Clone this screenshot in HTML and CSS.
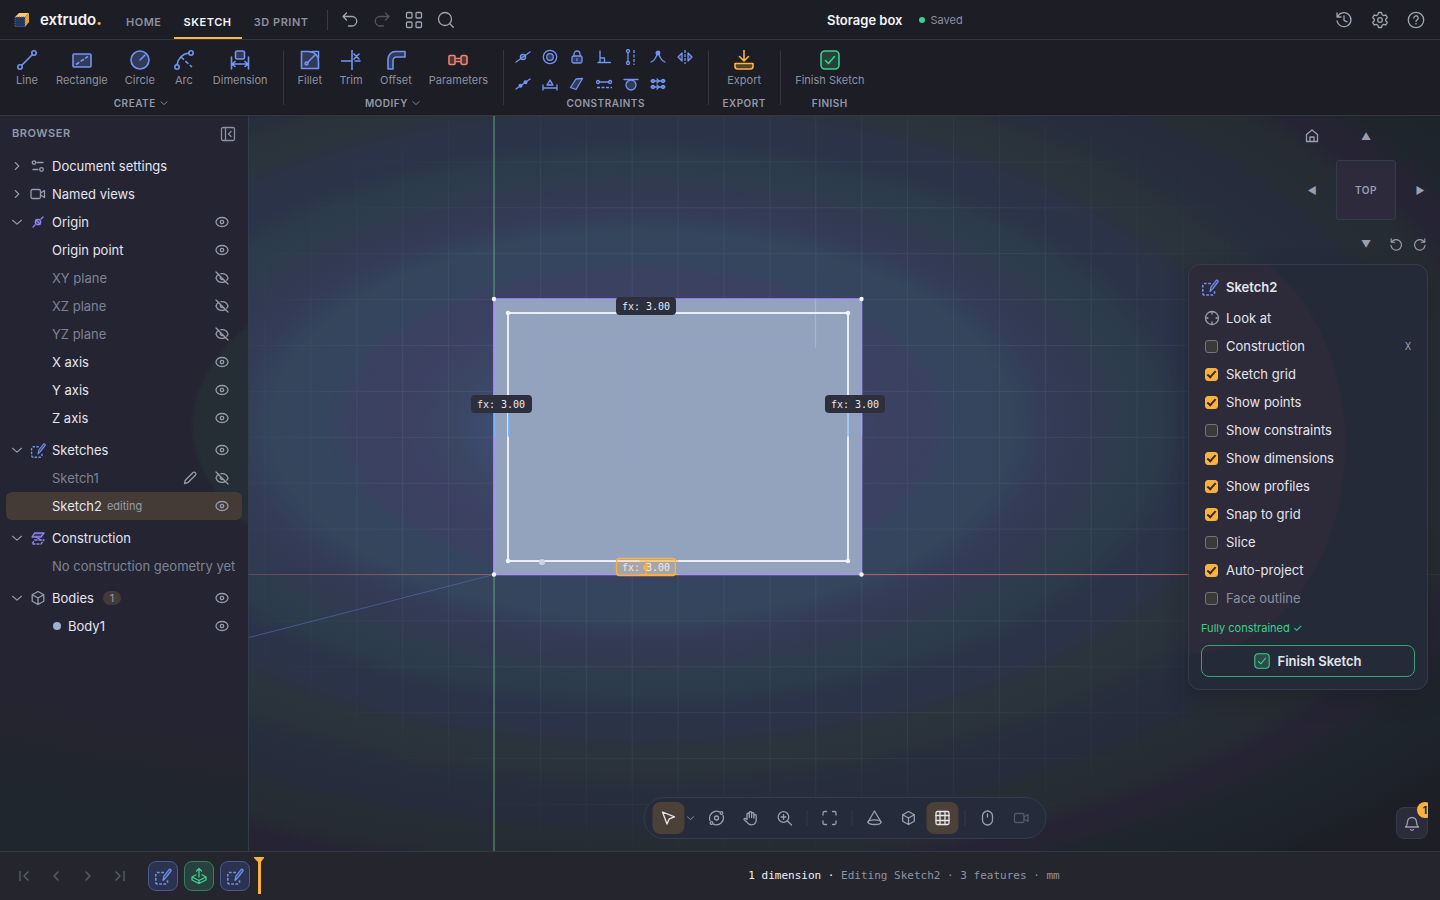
FILE: index.html
```html
<!DOCTYPE html>
<html lang="en">
<head>
<meta charset="utf-8">
<title>Storage box – extrudo</title>
<link rel="stylesheet" href="styles.css">
</head>
<body>
<svg class="sprite" aria-hidden="true">
  <symbol id="eye" viewBox="0 0 16 16"><ellipse cx="8" cy="8" rx="6" ry="4.5"/><circle cx="8" cy="8" r="1.7"/></symbol>
  <symbol id="eye-off" viewBox="0 0 16 16"><path d="M5 4.1C3.4 4.900 2.500 6.200 2 8c.9 2.800 3 4.400 6 4.400 1.200 0 2.200-.3 3.100-.8M7 3.600c3.500-.4 6 1.200 7 4.400-.3.900-.7 1.600-1.200 2.200M6.600 6.800a1.800 1.800 0 0 0 2.500 2.500M2 2l12 12"/></symbol>
  <symbol id="right" viewBox="0 0 16 16"><path d="M6 4l4 4-4 4"/></symbol>
  <symbol id="left" viewBox="0 0 16 16"><path d="M10 4L6 8l4 4"/></symbol>
  <symbol id="down" viewBox="0 0 16 16"><path d="M3 6l5 4.500L13 6"/></symbol>
  <symbol id="sketch" viewBox="0 0 20 20"><path d="M11 6H4a2 2 0 0 0-2 2v9a2 2 0 0 0 2 2h9a2 2 0 0 0 2-2v-3" stroke-width="1.700" stroke-linecap="butt" stroke-dasharray="3 1.700"/><path d="M10 15l1-5 6-7.500c1.200-.6 2.400.4 2 1.800l-6 7.700z" fill="currentColor" fill-opacity=".35"/></symbol>
  <symbol id="check-box" viewBox="0 0 20 20"><rect x="1" y="1" width="18" height="18" rx="4" fill="currentColor" fill-opacity=".22"/><path d="M5.500 10.500l3 3 6-7"/></symbol>
  <symbol id="cube" viewBox="0 0 16 16"><path d="M8 1.500l5.800 3.200v6.600L8 14.500l-5.800-3.200V4.700zM2.200 4.700L8 8l5.800-3.300M8 8v6.500"/></symbol>
  <symbol id="camera" viewBox="0 0 16 16"><rect x="1" y="3.500" width="9.500" height="9" rx="1.500"/><path d="M10.500 7l4-2.500v7l-4-2.500"/></symbol>
  <symbol id="point-line" viewBox="0 0 16 16"><path d="M1 13L15 3"/><circle cx="8" cy="8" r="2.600" fill="currentColor" fill-opacity=".3"/></symbol>
  <symbol id="undo" viewBox="0 0 18 18"><path d="M5.500 2L2 5.500 5.500 9M2 5.500h9a4.700 4.700 0 0 1 0 9.500H7.500"/></symbol>
  <symbol id="rotate" viewBox="0 0 16 16"><path d="M2.500 2v4h4M3 6a6 6 0 1 1-.8 3.500"/></symbol>
</svg>

<div class="app">
  <header class="topbar">
    <a class="brand" href="#">
      <svg width="16" height="16" viewBox="0 0 16 16"><path d="M1 5l4-4h10l-4 4z" fill="#ffc878" stroke="none"/><path d="M11 5l4-4v9l-4 5z" fill="#e8a03c" stroke="none"/><rect x="1" y="5" width="10" height="9.500" fill="#24375c" stroke="#4a70b0" stroke-width="1" stroke-linecap="butt" stroke-dasharray="1 1"/></svg>
      <span>extrudo<b>.</b></span>
    </a>
    <nav class="tabs">
      <button>HOME</button><button class="active">SKETCH</button><button>3D PRINT</button>
    </nav>
    <i class="bar"></i>
    <div class="quick">
      <button aria-label="Undo"><svg class="i18"><use href="#undo"/></svg></button>
      <button aria-label="Redo" class="off"><svg class="i18 flip"><use href="#undo"/></svg></button>
      <button aria-label="Apps"><svg class="i18" viewBox="0 0 18 18"><rect x="1.500" y="1.500" width="5.500" height="5.500" rx="1"/><rect x="11" y="1.500" width="5.500" height="5.500" rx="1"/><rect x="1.500" y="11" width="5.500" height="5.500" rx="1"/><rect x="11" y="11" width="5.500" height="5.500" rx="1"/></svg></button>
      <button aria-label="Search"><svg class="i18" viewBox="0 0 18 18"><circle cx="8" cy="8" r="6.500"/><path d="M12.800 12.800l3.500 3.500"/></svg></button>
    </div>
    <div class="doc"><strong>Storage box</strong><span class="saved"><i></i>Saved</span></div>
    <div class="account">
      <button aria-label="History"><svg class="i18" viewBox="0 0 18 18"><path d="M2 2v4h4M2.500 6a7 7 0 1 1-.4 4M9 5v4.300l3 1.500"/></svg></button>
      <button aria-label="Settings"><svg class="i18" viewBox="0 0 18 18"><path d="M7.500 1.500h3l.6 2.200 1.500.9 2.200-.6 1.500 2.600-1.600 1.600v1.600l1.600 1.600-1.500 2.600-2.200-.6-1.500.9-.6 2.200h-3l-.6-2.200-1.500-.9-2.200.6-1.500-2.600 1.600-1.600V8.200L1.700 6.600 3.200 4l2.200.6 1.500-.9z"/><circle cx="9" cy="9" r="2.300"/></svg></button>
      <button aria-label="Help"><svg class="i18" viewBox="0 0 18 18"><circle cx="9" cy="9" r="7.700"/><path d="M6.800 7a2.200 2.200 0 1 1 3.300 1.900c-.8.400-1.100.7-1.100 1.500M9 12.500v.6"/></svg></button>
    </div>
  </header>

  <div class="ribbon">
    <section class="group">
      <div class="tools">
        <button><svg class="i20" viewBox="0 0 20 20"><path d="M5 15L15 5"/><circle cx="3" cy="17" r="2.200"/><circle cx="17" cy="3" r="2.200"/></svg>Line</button>
        <button><svg class="i20" viewBox="0 0 20 20"><rect x="1" y="4" width="18" height="13" rx="1" class="tint"/><path d="M4 14.500L16 6.500" stroke-linecap="butt" stroke-dasharray="4 1.500"/></svg>Rectangle</button>
        <button><svg class="i20" viewBox="0 0 20 20"><circle cx="10" cy="10" r="9" class="tint"/><path d="M10 10l5-5"/></svg>Circle</button>
        <button><svg class="i20" viewBox="0 0 20 20"><path d="M3 15C4 9 8 4 15 3"/><path d="M7 7l11 10" stroke-linecap="butt" stroke-dasharray="4 2"/><circle cx="3" cy="17" r="2.200"/><circle cx="17" cy="3" r="2.200"/></svg>Arc</button>
        <button><svg class="i20" viewBox="0 0 20 20"><rect x="5.500" y="1" width="9" height="8" rx="1.500" class="tint"/><path d="M1.500 7v12M18.500 7v12M2 14h16M5 11.500L2 14l3 2.500M15 11.500l3 2.500-3 2.500"/></svg>Dimension</button>
      </div>
      <h2>CREATE <svg class="tiny"><use href="#down"/></svg></h2>
    </section>
    <section class="group">
      <div class="tools">
        <button><svg class="i20" viewBox="0 0 20 20"><path d="M1.500 1.500h7c6 0 10 4 10 10v7h-17z" class="tint"/><path d="M12 1.500h6.500V8M7 13l8-8"/><circle cx="6.500" cy="13.500" r="1.500"/></svg>Fillet</button>
        <button><svg class="i20" viewBox="0 0 20 20"><path d="M0 11h11M11 0v20M13 4l5 5M18 4l-5 5M14 11h5"/></svg>Trim</button>
        <button><svg class="i20" viewBox="0 0 20 20"><path d="M2 19V9a7.500 7.500 0 0 1 7.500-7.500H19V7h-8.500A3.500 3.500 0 0 0 7 10.500V19z" class="tint"/></svg>Offset</button>
        <button class="red"><svg class="i20" viewBox="0 0 20 20"><rect x="1" y="5.500" width="6" height="9" rx="1" class="tint"/><rect x="13" y="5.500" width="6" height="9" rx="2" class="tint"/><path d="M8 8.500h4M8 11.500h4"/></svg>Parameters</button>
      </div>
      <h2>MODIFY <svg class="tiny"><use href="#down"/></svg></h2>
    </section>
    <section class="group">
      <div class="constraints">
        <button aria-label="Coincident"><svg class="i16"><use href="#point-line"/></svg></button>
        <button aria-label="Concentric"><svg class="i16" viewBox="0 0 16 16"><circle cx="8" cy="8" r="6.700"/><circle cx="8" cy="8" r="3.300" class="tint"/></svg></button>
        <button aria-label="Fix"><svg class="i16" viewBox="0 0 16 16"><rect x="3" y="7" width="10" height="7" rx="1.500" class="tint"/><path d="M5 7V5a3 3 0 0 1 6 0v2M8 10v1.500"/></svg></button>
        <button aria-label="Perpendicular"><svg class="i16" viewBox="0 0 16 16"><path d="M4 2v11.500M2 13.500h12.500M4 9h4.500v4.500"/></svg></button>
        <button aria-label="Vertical"><svg class="i16" viewBox="0 0 16 16"><path d="M5 4v8"/><circle cx="5" cy="2" r="1.500"/><circle cx="5" cy="14" r="1.500"/><path d="M11 1v15" stroke-linecap="butt" stroke-dasharray="3 1.500"/></svg></button>
        <button aria-label="Midpoint"><svg class="i16" viewBox="0 0 16 16"><path d="M1 13C4 12 5 10 8 4c3 6 4 8 7 9"/><circle cx="8" cy="4" r="1.800" fill="currentColor"/></svg></button>
        <button aria-label="Symmetry"><svg class="i16" viewBox="0 0 16 16"><path d="M8 1v14" stroke-linecap="butt" stroke-dasharray="3 1"/><path d="M5 4v8L1 8zM11 4v8l4-4z" class="tint"/></svg></button>
        <button aria-label="Collinear"><svg class="i16" viewBox="0 0 16 16"><path d="M1 13L15 3"/><circle cx="5.500" cy="9.800" r="1.400" fill="currentColor"/><circle cx="10.500" cy="6.200" r="1.400" fill="currentColor"/></svg></button>
        <button aria-label="Equal"><svg class="i16" viewBox="0 0 16 16"><path d="M1 9v5M15 9v5M1 12h14"/><path d="M8 4l3 5H5z" class="tint"/></svg></button>
        <button aria-label="Parallel"><svg class="i16" viewBox="0 0 16 16"><path d="M1.500 11.500L7 3l6.500-.5L7 13.500z" class="tint"/></svg></button>
        <button aria-label="Horizontal"><svg class="i16" viewBox="0 0 16 16"><path d="M1 11.500h15" stroke-linecap="butt" stroke-dasharray="3 1.500"/><path d="M3 6h10"/><circle cx="2" cy="6" r="1.500"/><circle cx="14" cy="6" r="1.500"/></svg></button>
        <button aria-label="Tangent"><svg class="i16" viewBox="0 0 16 16"><path d="M1 3.500h14"/><circle cx="8" cy="9" r="5" class="tint"/></svg></button>
        <button aria-label="Pattern"><svg class="i16" viewBox="0 0 16 16"><path d="M1 5h14M1 11h14"/><circle cx="3" cy="5" r="1.500"/><circle cx="13" cy="5" r="1.500"/><circle cx="3" cy="11" r="1.500"/><circle cx="13" cy="11" r="1.500"/><path d="M7 3l2 2-2 2M7 9l2 2-2 2"/></svg></button>
      </div>
      <h2>CONSTRAINTS</h2>
    </section>
    <section class="group">
      <div class="tools">
        <button class="amber"><svg class="i20" viewBox="0 0 20 20"><path d="M10 0v10M5.500 6.500L10 11l4.500-4.500"/><path d="M1 13.500h18v3a2.500 2.500 0 0 1-2.500 2.500h-13A2.500 2.500 0 0 1 1 16.500z" class="tint"/></svg>Export</button>
      </div>
      <h2>EXPORT</h2>
    </section>
    <section class="group">
      <div class="tools">
        <button class="green"><svg class="i20"><use href="#check-box"/></svg>Finish Sketch</button>
      </div>
      <h2>FINISH</h2>
    </section>
  </div>

  <main class="work">
    <aside class="browser">
      <div class="browser-head"><h2>BROWSER</h2><button aria-label="Collapse"><svg class="i16" viewBox="0 0 16 16"><rect x="1.500" y="1.500" width="13" height="13" rx="1.500"/><path d="M5.500 1.500v13M11 5.500L8.500 8l2.500 2.500"/></svg></button></div>
      <ul class="tree">
        <li><svg class="chev"><use href="#right"/></svg><svg class="i16" viewBox="0 0 16 16"><circle cx="4" cy="4.500" r="1.700"/><path d="M7 4.500h6M3 11.500h5"/><circle cx="11.500" cy="11.500" r="1.800"/></svg><span>Document settings</span></li>
        <li><svg class="chev"><use href="#right"/></svg><svg class="i16"><use href="#camera"/></svg><span>Named views</span></li>
        <li><svg class="chev"><use href="#down"/></svg><svg class="i16 violet" viewBox="0 0 16 16"><path d="M3 13l2-2M11 5l2-2M6 6l4 4"/><circle cx="8" cy="8" r="2.700" class="tint"/></svg><span>Origin</span><button class="vis" aria-label="Hide Origin"><svg class="i16"><use href="#eye"/></svg></button></li>
        <li class="child"><span>Origin point</span><button class="vis" aria-label="Hide Origin point"><svg class="i16"><use href="#eye"/></svg></button></li>
        <li class="child dim"><span>XY plane</span><button class="vis" aria-label="Show XY plane"><svg class="i16"><use href="#eye-off"/></svg></button></li>
        <li class="child dim"><span>XZ plane</span><button class="vis" aria-label="Show XZ plane"><svg class="i16"><use href="#eye-off"/></svg></button></li>
        <li class="child dim"><span>YZ plane</span><button class="vis" aria-label="Show YZ plane"><svg class="i16"><use href="#eye-off"/></svg></button></li>
        <li class="child"><span>X axis</span><button class="vis" aria-label="Hide X axis"><svg class="i16"><use href="#eye"/></svg></button></li>
        <li class="child"><span>Y axis</span><button class="vis" aria-label="Hide Y axis"><svg class="i16"><use href="#eye"/></svg></button></li>
        <li class="child"><span>Z axis</span><button class="vis" aria-label="Hide Z axis"><svg class="i16"><use href="#eye"/></svg></button></li>
        <li class="section"><svg class="chev"><use href="#down"/></svg><svg class="i16 blue"><use href="#sketch"/></svg><span>Sketches</span><button class="vis" aria-label="Hide Sketches"><svg class="i16"><use href="#eye"/></svg></button></li>
        <li class="child dim"><span>Sketch1</span><button class="vis" aria-label="Edit Sketch1"><svg class="i16" viewBox="0 0 16 16"><path d="M2.500 13.500l.8-3.300 7.500-7.500a1.700 1.700 0 0 1 2.500 2.500l-7.500 7.500z"/></svg></button><button class="vis" aria-label="Show Sketch1"><svg class="i16"><use href="#eye-off"/></svg></button></li>
        <li class="child selected"><span>Sketch2</span><small>editing</small><button class="vis" aria-label="Hide Sketch2"><svg class="i16"><use href="#eye"/></svg></button></li>
        <li class="section"><svg class="chev"><use href="#down"/></svg><svg class="i16 violet" viewBox="0 0 16 16"><path d="M4.500 3h9.500l-3 4H2z" class="tint"/><path d="M6 7l5 3" /><path d="M4.500 10h9.500l-3 4H2z" stroke-linecap="butt" stroke-dasharray="3 1"/></svg><span>Construction</span></li>
        <li class="child dim"><span>No construction geometry yet</span></li>
        <li class="section"><svg class="chev"><use href="#down"/></svg><svg class="i16"><use href="#cube"/></svg><span>Bodies</span><em>1</em><button class="vis" aria-label="Hide Bodies"><svg class="i16"><use href="#eye"/></svg></button></li>
        <li class="child"><i class="swatch"></i><span>Body1</span><button class="vis" aria-label="Hide Body1"><svg class="i16"><use href="#eye"/></svg></button></li>
      </ul>
    </aside>

    <div class="viewport">
      <svg class="scene" viewBox="249 116 1191 735" preserveAspectRatio="xMidYMid slice" role="img" aria-label="Sketch of a box outline">
        <defs>
          <pattern id="grid" x="494" y="574.500" width="45.900" height="45.900" patternUnits="userSpaceOnUse"><path d="M0 0H45.900M0 0V45.900" stroke="#7f9fa5" stroke-width="2" fill="none"/></pattern>
          <radialGradient id="fade" gradientUnits="userSpaceOnUse" cx="0" cy="0" r="1" gradientTransform="translate(760 450) scale(600 440)"><stop offset="0" stop-color="#fff" stop-opacity=".7"/><stop offset=".6" stop-color="#fff"/><stop offset="1" stop-color="#fff" stop-opacity="0"/></radialGradient>
          <mask id="gridmask"><rect x="249" y="116" width="1191" height="735" fill="url(#fade)"/></mask>
          <linearGradient id="xaxis" gradientUnits="userSpaceOnUse" x1="249" y1="0" x2="1440" y2="0"><stop offset="0" stop-color="#d4605e" stop-opacity=".3"/><stop offset=".3" stop-color="#d4605e" stop-opacity=".8"/><stop offset=".75" stop-color="#d4605e" stop-opacity=".9"/><stop offset="1" stop-color="#d4605e" stop-opacity=".1"/></linearGradient>
        </defs>
        <rect x="249" y="116" width="1191" height="735" fill="url(#grid)" mask="url(#gridmask)" opacity=".13"/>
        <path d="M249 574.500H1440" stroke="url(#xaxis)" stroke-width="1.200"/>
        <path d="M494 116V851" stroke="#4f9d70" stroke-width="1.300" opacity=".85"/>
        <path d="M494 574.500L249 637.500" stroke="#5470bd" stroke-width=".8" opacity=".75"/>
        <rect x="494" y="299" width="368" height="275.500" fill="#94a3bd"/>
        <path d="M540 299v80M632 299v155M494 345H820" stroke="#94a0cc" opacity=".5"/>
        <path d="M815.500 299v48" stroke="#b0bbcd" opacity=".7"/>
        <path d="M861.500 299V574.500H494V299H862" fill="none" stroke="#a593fb" stroke-width="1.600"/>
        <rect x="508" y="313" width="340" height="248" fill="none" stroke="#eceef7" stroke-width="2"/>
        <path d="M494.500 412v24M508.500 412v24M848 412v24M861.500 412v24" stroke="#7db2f8"/>
        <g fill="#f3f4fa"><circle cx="494" cy="299" r="2.200"/><circle cx="861.500" cy="299" r="2.200"/><circle cx="494" cy="574.500" r="2.200"/><circle cx="861.500" cy="574.500" r="2.200"/><circle cx="508" cy="313" r="2.200"/><circle cx="848" cy="313" r="2.200"/><circle cx="508" cy="561" r="2.200"/><circle cx="848" cy="561" r="2.200"/><circle cx="542" cy="562" r="3" fill="#ccd4e4"/></g>
        <g class="dims">
          <rect x="616" y="297" width="60" height="18" rx="4"/><text x="646" y="310">fx: 3.00</text>
          <rect x="471" y="395" width="61" height="18" rx="4"/><text x="501" y="408">fx: 3.00</text>
          <rect x="825" y="395" width="60" height="18" rx="4"/><text x="855" y="408">fx: 3.00</text>
          <rect class="hot" x="616.500" y="558.500" width="59" height="17" rx="3"/>
          <path d="M640 561h38M640 574.500h38M646 561v13" stroke="#fdb13d" stroke-width="1.200"/>
          <circle cx="646" cy="567.500" r="3" fill="#fdb13d"/><text x="646" y="571">fx: 3.00</text>
        </g>
      </svg>

      <div class="viewcube">
        <button aria-label="Home view"><svg class="i16" viewBox="0 0 16 16"><path d="M2.500 6.500L8 2l5.500 4.500v7h-11zM6 13.500V9h4v4.500"/></svg></button>
        <button>▲</button><i></i>
        <button>◀</button><button class="face">TOP</button><button>▶</button>
        <i></i><button>▼</button>
        <div class="turn"><button aria-label="Rotate left"><svg class="i14"><use href="#rotate"/></svg></button><button aria-label="Rotate right"><svg class="i14 flip"><use href="#rotate"/></svg></button></div>
      </div>

      <section class="palette">
        <h3><svg class="i18 blue"><use href="#sketch"/></svg>Sketch2</h3>
        <button class="row"><svg class="i16" viewBox="0 0 16 16"><circle cx="8" cy="8" r="6.500"/><path d="M8 1.500V4M8 12v2.500M1.500 8H4M12 8h2.500"/></svg>Look at</button>
        <label class="row"><input type="checkbox">Construction<kbd>X</kbd></label>
        <label class="row"><input type="checkbox" checked>Sketch grid</label>
        <label class="row"><input type="checkbox" checked>Show points</label>
        <label class="row"><input type="checkbox">Show constraints</label>
        <label class="row"><input type="checkbox" checked>Show dimensions</label>
        <label class="row"><input type="checkbox" checked>Show profiles</label>
        <label class="row"><input type="checkbox" checked>Snap to grid</label>
        <label class="row"><input type="checkbox">Slice</label>
        <label class="row"><input type="checkbox" checked>Auto-project</label>
        <label class="row dim"><input type="checkbox">Face outline</label>
        <p>Fully constrained ✓</p>
        <button class="finish"><svg class="i16"><use href="#check-box"/></svg>Finish Sketch</button>
      </section>

      <div class="navbar">
        <button class="on" aria-label="Select"><svg class="i16" viewBox="0 0 16 16"><path d="M2 2l12 4.800-5.200 2L6.500 14z"/></svg></button>
        <button class="more" aria-label="Selection modes"><svg class="tiny"><use href="#down"/></svg></button>
        <button aria-label="Orbit"><svg class="i16" viewBox="0 0 16 16"><path d="M1.500 10.500A7 7 0 0 1 11 1.800M14.500 5.500a7 7 0 0 1-9.500 8.700"/><circle cx="8" cy="8" r="2"/><circle cx="13" cy="3" r="1.300"/><circle cx="3" cy="13" r="1.300"/></svg></button>
        <button aria-label="Pan"><svg class="i16" viewBox="0 0 16 16"><path d="M4.500 9.500V4a1.200 1.200 0 0 1 2.300 0v3.500-5a1.200 1.200 0 0 1 2.300 0v5V3.500a1.200 1.200 0 0 1 2.300 0V8 5.500a1.200 1.200 0 0 1 2.300 0V10c0 3-1.700 4.800-4.700 4.800-2.500 0-3.700-1-4.700-2.800L1.500 9.500c0-1.500 1.500-1.500 3 0"/></svg></button>
        <button aria-label="Zoom"><svg class="i16" viewBox="0 0 16 16"><circle cx="7" cy="7" r="5.300"/><path d="M11 11l4 4M7 4.700v4.600M4.700 7h4.600"/></svg></button>
        <i class="sep"></i>
        <button aria-label="Fit"><svg class="i16" viewBox="0 0 16 16"><path d="M1.500 5V3A1.500 1.500 0 0 1 3 1.500h2M11 1.500h2A1.500 1.500 0 0 1 14.500 3v2M14.500 11v2a1.500 1.500 0 0 1-1.500 1.500h-2M5 14.500H3A1.500 1.500 0 0 1 1.500 13v-2"/></svg></button>
        <i class="sep"></i>
        <button aria-label="Projection"><svg class="i16" viewBox="0 0 16 16"><path d="M1.500 12L8 1l6.500 11"/><ellipse cx="8" cy="12.200" rx="6.500" ry="2.300"/></svg></button>
        <button aria-label="Display style"><svg class="i16"><use href="#cube"/></svg></button>
        <button class="on" aria-label="Grid"><svg class="i16" viewBox="0 0 16 16"><rect x="1.500" y="1.500" width="13" height="13" rx="1.500"/><path d="M1.500 5.500h13M1.500 10.500h13M5.500 1.500v13M10.500 1.500v13"/></svg></button>
        <i class="sep"></i>
        <button aria-label="Mouse"><svg class="i16" viewBox="0 0 16 16"><rect x="3" y="1" width="10" height="14" rx="5"/><path d="M8 4v3"/></svg></button>
        <button class="off" aria-label="Record"><svg class="i16"><use href="#camera"/></svg></button>
      </div>

      <div class="alerts"><button aria-label="Notifications"><svg class="i16" viewBox="0 0 16 16"><path d="M1.500 12c1.500-1.300 2-2.500 2-5a4.500 4.500 0 0 1 9 0c0 2.500.5 3.700 2 5zM6.500 14.500a1.800 1.800 0 0 0 3 0"/></svg></button><b>1</b></div>
    </div>
  </main>

  <footer class="timeline">
    <div class="steps">
      <button aria-label="First"><svg class="i16" viewBox="0 0 16 16"><path d="M4 3.500v9M12 4L8 8l4 4"/></svg></button>
      <button aria-label="Previous"><svg class="i16"><use href="#left"/></svg></button>
      <button aria-label="Next"><svg class="i16"><use href="#right"/></svg></button>
      <button aria-label="Last"><svg class="i16" viewBox="0 0 16 16"><path d="M12 3.500v9M4 4l4 4-4 4"/></svg></button>
    </div>
    <div class="features">
      <button aria-label="Sketch1"><svg class="i18"><use href="#sketch"/></svg></button>
      <button class="extrude" aria-label="Extrude"><svg class="i18" viewBox="0 0 18 18"><path d="M9 10V1.500M6.500 4L9 1.500 11.500 4M6 7.800L2 10l7 3.500 7-3.500-4-2.200M2 10v3l7 3.500 7-3.500v-3M9 13.500v3"/></svg></button>
      <button aria-label="Sketch2"><svg class="i18"><use href="#sketch"/></svg></button>
      <svg class="marker" viewBox="0 0 10 38"><path d="M0 0h10v1L7 5v32H4V5L0 1z"/></svg>
    </div>
    <p><b>1 dimension ·</b> Editing Sketch2 · 3 features · mm</p>
  </footer>
</div>
</body>
</html>
```
FILE: styles.css
```css
*, *::before, *::after { box-sizing: border-box; margin: 0; padding: 0; }
body { font: 13px/16px Inter, "Liberation Sans", sans-serif; color: #e6e8f0; background: #1c1d25; }
button { font: inherit; color: inherit; background: none; border: 0; display: flex; align-items: center; justify-content: center; }
svg { display: block; flex: none; fill: none; stroke: currentColor; stroke-width: 1.3; stroke-linecap: round; stroke-linejoin: round; }
h2 { font-size: 11px; line-height: 14px; font-weight: 600; letter-spacing: .05em; color: #9298a8; }
.sprite { position: absolute; width: 0; height: 0; }
.i14 { width: 14px; height: 14px; }
.i16 { width: 16px; height: 16px; }
.i18 { width: 18px; height: 18px; }
.i20 { width: 20px; height: 20px; stroke-width: 1.6; }
.tiny { width: 10px; height: 10px; }
.flip { transform: scaleX(-1); }
.tint { fill: currentColor; fill-opacity: .25; }
.blue { color: #6f93f5; }
.off { opacity: .4; }

.app { display: grid; grid-template-rows: 40px 76px 1fr 49px; height: 100vh; }

/* top bar */
.topbar { display: flex; align-items: center; background: #1d1d25; border-bottom: 1px solid #343642; color: #a0a5b4; padding: 0 8px 0 14px; }
.brand { display: flex; align-items: center; gap: 10px; color: #f3f4f8; text-decoration: none; font-size: 15px; font-weight: 600; }
.brand b { color: #ffb43c; }
.tabs { display: flex; align-self: stretch; gap: 2px; margin-left: 14px; }
.tabs button { padding: 6px 10px 0; font-size: 11px; font-weight: 600; letter-spacing: .05em; color: #8b90a0; border-bottom: 2px solid transparent; }
.tabs .active { color: #f5f6fa; border-color: #ffb43c; }
.bar { width: 1px; height: 20px; background: #3a3c48; margin: 0 6px 0 8px; }
.quick { display: flex; }
.quick button { width: 32px; height: 32px; }
.account { display: flex; gap: 4px; }
.account button { width: 32px; height: 32px; }
.doc { flex: 1; display: flex; justify-content: center; align-items: center; gap: 16px; }
.doc strong { color: #f3f4f8; font-weight: 600; }
.saved { display: flex; align-items: center; gap: 6px; font-size: 11px; color: #8b90a0; }
.saved i { width: 6px; height: 6px; border-radius: 50%; background: #3ecf8e; }

/* ribbon */
.ribbon { display: flex; background: #1d1d25; border-bottom: 1px solid #343642; padding-top: 5px; }
.group { display: flex; flex-direction: column; align-items: center; justify-content: space-between; padding: 0 8px 5px; position: relative; }
.group + .group::before { content: ""; position: absolute; left: 0; top: 5px; bottom: 10px; width: 1px; background: #343642; }
.group h2 { display: flex; align-items: center; gap: 3px; font-size: 10px; }
.tools { display: flex; gap: 3px; padding-top: 5px; }
.tools button { flex-direction: column; gap: 3px; min-width: 38px; padding: 0 7px; font-size: 11px; line-height: 14px; color: #8b90a0; }
.tools svg, .constraints svg { color: #7294f2; }
.tools .red svg { color: #f08470; }
.tools .amber { min-width: 56px; }
.tools .amber svg { color: #fdb540; }
.tools .green svg, .finish svg { color: #3ecf8e; }
.constraints { display: grid; grid-template-columns: repeat(7, 24px); grid-auto-rows: 24px; gap: 3px; padding-right: 3px; }

/* browser */
.work { display: grid; grid-template-columns: 249px 1fr; min-height: 0; }
.browser { border-right: 1px solid #323e4c; background: radial-gradient(ellipse 460px 210px at 650px 309px, #252d35 99%, transparent 100%), radial-gradient(ellipse 1000px 560px at 391px 150px, #252433 85%, #25252f 90%, #1f262d 100%); color: #8b90a0; }
.browser-head { display: flex; justify-content: space-between; align-items: center; height: 36px; padding: 0 12px; }
.browser-head h2 { padding-bottom: 2px; }
.tree { list-style: none; padding: 0 6px; }
.tree li { display: flex; align-items: center; gap: 6px; height: 28px; padding: 0 12px 0 4px; border-radius: 6px; color: #959bab; }
.tree li span { color: #e3e5ee; white-space: nowrap; }
.tree .child { padding-left: 46px; }
.tree .dim span { color: #7d8393; }
.tree .section { margin-top: 4px; }
.tree .selected { gap: 5px; background: #443b36; }
.tree small { font-size: 11px; }
.tree em { font-style: normal; font-size: 11px; line-height: 14px; padding: 0 7px; margin-left: 3px; border-radius: 7px; background: #443b36; }
.tree .vis { margin-left: auto; }
.tree .vis + .vis { margin-left: 10px; }
.tree .blue { color: #6f93f5; }
.tree .violet { color: #8f84f5; }
.chev { width: 14px; height: 14px; }
.swatch { width: 8px; height: 8px; margin: 0 1px; border-radius: 50%; background: #9fb0c8; }

/* viewport */
.viewport { position: relative; overflow: hidden; color: #9a9fb0; background: radial-gradient(ellipse 1000px 520px at 33% 42%, #3c4d75 0, #3c4b70 15%, #3b4662 19%, #3c4162 24%, #3a4160 29%, #34465e 32%, #34455c 37%, #343b56 41%, #323952 45%, #2d3c4d 49%, #2c3a4a 52%, #2b334a 55%, #2b3348 59%, #2b333c 63%, #2a323b 67%, #262d3d 71%, #262c3c 76%, #262d35 79%, #262c33 84%, #262434 87%, #262433 90%, #1e252d 93%, #1e242c 99%, #1d1e26 106%); }
.scene { width: 100%; height: 100%; stroke: none; }
.dims rect { fill: #2d2f3c; }
.dims .hot { fill: #fdb13d; fill-opacity: .2; stroke: #fdb13d; }
.dims text { fill: #e8eaf2; stroke: none; font: 10px "DejaVu Sans Mono", monospace; text-anchor: middle; }

.viewcube { position: absolute; top: 8px; right: 8px; display: grid; grid-template-columns: 24px 60px 24px; grid-template-rows: 24px 60px 24px; gap: 12px; align-items: center; justify-items: center; font-size: 10px; }
.viewcube button { min-width: 24px; height: 24px; }
.viewcube .face { width: 60px; height: 60px; border: 1px solid #343c4b; border-radius: 3px; background: #2d2b3b; font-weight: 600; letter-spacing: .05em; }
.turn { display: flex; justify-self: end; }

.palette { position: absolute; top: 148px; right: 12px; width: 240px; padding: 8px 12px 12px; border: 1px solid #343c4b; border-radius: 12px; background: radial-gradient(ellipse 157px 210px at 0 180px, #2d2a39 99%, #252a39 100%); box-shadow: 0 8px 20px #1a1b2480; color: #e3e5ee; }
.palette h3 { display: flex; align-items: center; gap: 7px; height: 28px; margin-bottom: 3px; font-size: 13px; font-weight: 600; }
.row { display: flex; align-items: center; gap: 8px; width: 100%; height: 28px; padding: 0 4px; justify-content: flex-start; }
button.row { gap: 6px; padding-left: 3px; }
.row svg { color: #9a9fb0; }
.row input { position: relative; appearance: none; width: 13px; height: 13px; border: 1px solid #77756f; border-radius: 3px; background: #3b3a3b; }
.row input:checked { border-color: #fdb13d; background: #fdb13d; }
.row input:checked::after { content: ""; position: absolute; left: 3px; top: 0; width: 5px; height: 9px; border: solid #322d2b; border-width: 0 2px 2px 0; transform: rotate(42deg); }
.row.dim { color: #8b90a0; }
kbd { margin-left: auto; font: 10px "DejaVu Sans Mono", monospace; color: #9a9fb0; }
.palette p { margin: 8px 0 9px; font-size: 11px; color: #3ecf8e; }
.finish { width: 100%; height: 32px; gap: 7px; border: 1px solid #35a276; border-radius: 8px; font-weight: 600; }

.navbar { position: absolute; left: 50%; bottom: 12px; transform: translateX(-50%); display: flex; align-items: center; gap: 2px; height: 42px; padding: 0 8px; border: 1px solid #343c4b; border-radius: 21px; background: #252b3a; }
.navbar button { width: 32px; height: 32px; border-radius: 8px; }
.navbar .on { background: #4c4139; color: #e8e6ea; }
.navbar .more { width: 16px; margin-left: -4px; }
.sep { width: 1px; height: 16px; margin: 0 4px; background: #343a48; }

.alerts { position: absolute; right: 12px; bottom: 12px; padding-top: 5px; overflow: hidden; }
.alerts button { width: 32px; height: 32px; border: 1px solid #343c4b; border-radius: 8px; background: #2c2b3a; }
.alerts b { position: absolute; top: 0; left: 21px; width: 16px; border-radius: 8px; background: #fdb13d; color: #24232b; font-size: 10px; text-align: center; }

/* timeline */
.timeline { display: flex; align-items: center; background: #25252e; border-top: 1px solid #343642; padding-left: 8px; }
.steps { display: flex; color: #5c606e; }
.steps button { width: 32px; height: 32px; }
.features { display: flex; align-items: center; gap: 6px; margin-left: 12px; }
.features button { width: 30px; height: 30px; border: 1px solid #465a93; border-radius: 8px; background: #2b3350; color: #6f93f5; }
.features .extrude { border-color: #32805f; background: #28403e; color: #3ecf8e; }
.marker { width: 10px; height: 38px; margin-left: -2px; stroke: none; fill: #fdb13d; }
.timeline p { flex: 1; text-align: center; padding-left: 104px; font: 11px/16px "DejaVu Sans Mono", monospace; color: #8e94a5; }
.timeline p b { color: #eef0f6; font-weight: 400; }
```
